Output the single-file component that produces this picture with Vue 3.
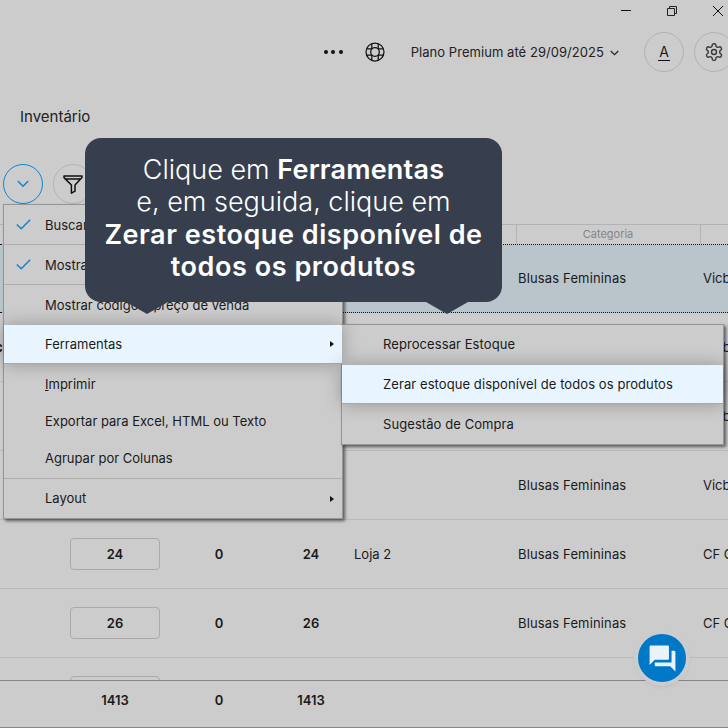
<script setup>
const rows = [
  { h: 68, qty: '', sel: true, cat: 'Blusas Femininas', brand: 'Vicb' },
  { qty: '', lead: 'c', cat: '', brand: 'Vicb' },
  { qty: '', cat: '', brand: 'Vicb' },
  { qty: '', cat: 'Blusas Femininas', brand: 'Vicb' },
  { qty: 24, a: 0, b: 24, loja: 'Loja 2', cat: 'Blusas Femininas', brand: 'CF C' },
  { qty: 26, a: 0, b: 26, cat: 'Blusas Femininas', brand: 'CF C' },
  { qty: '', cat: '', brand: '' }
]
const mainMenu = [
  { label: 'Buscar', check: true, line: true },
  { label: 'Mostrar', check: true, line: true },
  { label: 'Mostrar código e preço de venda' },
  { label: 'Ferramentas', active: true, arrow: true },
  { label: 'mprimir', key: 'I', short: true },
  { label: 'Exportar para Excel, HTML ou Texto', short: true },
  { label: 'Agrupar por Colunas', short: true, tall: true, line: true },
  { label: 'Layout', arrow: true, lift: true }
]
const subMenu = [
  { label: 'Reprocessar Estoque', lift: true },
  { label: 'Zerar estoque disponível de todos os produtos', active: true },
  { label: 'Sugestão de Compra' }
]
</script>

<template>
  <div class="screen">
    <div class="winbar">
      <svg width="10" height="10" viewBox="0 0 10 10"><path d="M0 4.5h10" stroke="#111" fill="none"/></svg>
      <svg width="10" height="10" viewBox="0 0 10 10"><path d="M.5 2.5h7v7h-7zM2.5 2.5V.5h7v7h-2" stroke="#222" fill="none"/></svg>
      <svg width="10" height="10" viewBox="0 0 10 10"><path d="M0 0l10 10M10 0L0 10" stroke="#111" fill="none"/></svg>
    </div>

    <div class="actions">
      <div class="dots"><i></i><i></i><i></i></div>
      <svg class="buoy" width="20" height="20" viewBox="0 0 20 20" fill="none" stroke="#111" stroke-width="1.25">
        <circle cx="10" cy="10" r="9"/><circle cx="10" cy="10" r="4.3"/>
        <path d="M6.8 1.7v5.4M13.2 1.7v5.4M6.8 12.9v5.4M13.2 12.9v5.4M1.7 6.8h5.4M1.7 13.2h5.4M12.9 6.8h5.4M12.9 13.2h5.4"/>
      </svg>
      <span class="plan">Plano Premium até 29/09/2025</span>
      <svg class="plan-chev" width="9" height="6" viewBox="0 0 9 6"><path d="M.7 1l3.8 3.6L8.3 1" stroke="#222" stroke-width="1.2" fill="none"/></svg>
      <div class="round font-btn"><span>A</span></div>
      <div class="round">
        <svg width="20" height="20" viewBox="0 0 24 24" fill="none" stroke="#3a3a3a" stroke-width="1.7" stroke-linejoin="round">
          <path d="M12.22 2h-.44a2 2 0 0 0-2 2v.18a2 2 0 0 1-1 1.73l-.43.25a2 2 0 0 1-2 0l-.15-.08a2 2 0 0 0-2.73.73l-.22.38a2 2 0 0 0 .73 2.73l.15.1a2 2 0 0 1 1 1.72v.51a2 2 0 0 1-1 1.74l-.15.09a2 2 0 0 0-.73 2.73l.22.38a2 2 0 0 0 2.73.73l.15-.08a2 2 0 0 1 2 0l.43.25a2 2 0 0 1 1 1.73V20a2 2 0 0 0 2 2h.44a2 2 0 0 0 2-2v-.18a2 2 0 0 1 1-1.73l.43-.25a2 2 0 0 1 2 0l.15.08a2 2 0 0 0 2.73-.73l.22-.39a2 2 0 0 0-.73-2.73l-.15-.08a2 2 0 0 1-1-1.74v-.5a2 2 0 0 1 1-1.74l.15-.09a2 2 0 0 0 .73-2.73l-.22-.38a2 2 0 0 0-2.73-.73l-.15.08a2 2 0 0 1-2 0l-.43-.25a2 2 0 0 1-1-1.73V4a2 2 0 0 0-2-2z"/>
          <circle cx="12" cy="12" r="3"/>
        </svg>
      </div>
    </div>

    <div class="title">Inventário</div>

    <div class="toolbar">
      <div class="round expand">
        <svg width="12" height="8" viewBox="0 0 12 8"><path d="M.8 1l5.2 5.2L11.2 1" stroke="#0e84d0" stroke-width="1.4" fill="none"/></svg>
      </div>
      <div class="round">
        <svg width="20" height="19" viewBox="0 0 20 19" fill="none" stroke="#111" stroke-width="1.5" stroke-linejoin="round">
          <path d="M1 1h18v1.6L12 10v6.2l-3.6 2V10L1 2.6zM3 4h14"/>
        </svg>
      </div>
    </div>

    <div class="table-head">
      <div class="hcell hcell-lead"></div>
      <div class="hcell hcell-cat">Categoria</div>
      <div class="hcell hcell-end"></div>
    </div>

    <div class="table-body">
      <div v-for="(r, i) in rows" :key="i" class="row" :class="{ sel: r.sel, first: r.h }">
        <div class="lead">{{ r.lead }}</div>
        <div class="qty">{{ r.qty }}</div>
        <div class="num">{{ r.a }}</div>
        <div class="num">{{ r.b }}</div>
        <div class="loja">{{ r.loja }}</div>
        <div class="cat">{{ r.cat }}</div>
        <div class="brand">{{ r.brand }}</div>
      </div>
    </div>

    <div class="table-foot">
      <div></div>
      <div class="foot-total">1413</div>
      <div class="num">0</div>
      <div class="num">1413</div>
    </div>

    <div class="menu main-menu">
      <div v-for="m in mainMenu" :key="m.label" class="item"
           :class="{ active: m.active, line: m.line, short: m.short, tall: m.tall, lift: m.lift }">
        <svg v-if="m.check" class="check" width="15" height="11" viewBox="0 0 15 11"><path d="M.8 5.4l4.4 4.4L14.2.8" stroke="#0e84d0" stroke-width="1.4" fill="none"/></svg>
        <span><u v-if="m.key">{{ m.key }}</u>{{ m.label }}</span>
        <i v-if="m.arrow" class="tri"></i>
      </div>
    </div>

    <div class="menu sub-menu">
      <div v-for="m in subMenu" :key="m.label" class="item" :class="{ active: m.active, lift: m.lift }">
        <span>{{ m.label }}</span>
      </div>
    </div>

    <div class="tip">
      <div>Clique em <b>Ferramentas</b></div>
      <div>e, em seguida, clique em</div>
      <div class="tip-strong"><b>Zerar estoque disponível de</b></div>
      <div class="tip-strong"><b>todos os produtos</b></div>
      <i class="tail tail-a"></i>
      <i class="tail tail-b"></i>
    </div>

    <div class="fab">
      <svg width="31" height="31" viewBox="0 0 24 24" fill="#eaf3fa">
        <path d="M21 6h-2v9H6v2c0 .55.45 1 1 1h11l4 4V7c0-.55-.45-1-1-1zm-4 6V3c0-.55-.45-1-1-1H3c-.55 0-1 .45-1 1v14l4-4h10c.55 0 1-.45 1-1z"/>
      </svg>
    </div>
  </div>
</template>

<style scoped>
.screen {
  position: relative;
  width: 728px;
  height: 728px;
  overflow: hidden;
  display: flex;
  flex-direction: column;
  background: #cccccc;
  color: #1a1a1a;
  font-family: Inter, "Liberation Sans", sans-serif;
  font-size: 13px;
}
.winbar {
  height: 20px;
  padding: 6px 5px 0 0;
  box-sizing: border-box;
  display: flex;
  justify-content: flex-end;
  gap: 36px;
}
.actions {
  height: 64px;
  margin-right: -6px;
  display: flex;
  align-items: center;
  justify-content: flex-end;
}
.dots { display: flex; gap: 3.5px; margin-right: 22px; }
.dots i { width: 4px; height: 4px; border-radius: 50%; background: #111; }
.buoy { margin-right: 26px; }
.plan { letter-spacing: 0.05px; color: #222; }
.plan-chev { margin: 1px 25px 0 6px; }
.round {
  width: 40px;
  height: 40px;
  flex: none;
  box-sizing: border-box;
  border: 1px solid #b3b3b3;
  border-radius: 50%;
  display: flex;
  align-items: center;
  justify-content: center;
}
.font-btn { margin-right: 10px; }
.font-btn span { font-size: 14px; border-bottom: 1px solid #111; line-height: 17px; padding: 0 1px; }
.title { height: 64px; line-height: 66px; padding-left: 20px; font-size: 15px; color: #222; }
.toolbar { height: 76px; padding: 16px 0 0 3px; box-sizing: border-box; display: flex; gap: 10px; }
.expand { border: 1.5px solid #0e84d0; }
.table-head {
  height: 21px;
  box-sizing: border-box;
  border-top: 1px solid #b3b3b3;
  border-bottom: 1px dotted #111;
  display: grid;
  grid-template-columns: 516px 184px 28px;
}
.hcell { border-right: 1px solid #b3b3b3; margin-right: -1px; }
.hcell-cat { color: #858585; font-size: 11px; line-height: 19px; text-align: center; }
.hcell-end { border-right: 0; }
.table-body { flex: 1; min-height: 0; overflow: hidden; }
.row {
  height: 69px;
  box-sizing: border-box;
  border-bottom: 1px solid #bababa;
  display: grid;
  grid-template-columns: 70px 90px 118px 66px 172px 184px 28px;
  align-items: center;
}
.row.first { height: 68px; padding-bottom: 1px; border-bottom: 1px dotted #111; background: #b9c4cb; }
.lead { text-indent: -5px; font-weight: 700; overflow: hidden; }
.qty {
  height: 32px;
  box-sizing: border-box;
  border: 1px solid #aaaaaa;
  border-radius: 4px;
  line-height: 30px;
  text-align: center;
  font-weight: 600;
}
.num { text-align: center; font-weight: 600; }
.loja { padding-left: 10px; }
.cat { padding-left: 2px; letter-spacing: 0.15px; }
.brand { padding-left: 3px; white-space: nowrap; }
.table-foot {
  height: 48px;
  flex: none;
  box-sizing: border-box;
  padding-bottom: 8px;
  border-top: 1px solid #858585;
  border-bottom: 1px solid #858585;
  display: grid;
  grid-template-columns: 70px 90px 118px 66px;
  align-items: center;
}
.foot-total { text-align: center; font-weight: 600; }
.menu {
  position: absolute;
  box-sizing: border-box;
  background: #cccccc;
  border: 1px solid #969696;
  box-shadow: 2px 2px 3px rgba(0, 0, 0, 0.55);
}
.main-menu { left: 3px; top: 204px; width: 340px; height: 315px; }
.sub-menu { left: 341px; top: 324px; width: 383px; height: 121px; }
.item {
  position: relative;
  height: 40px;
  box-sizing: border-box;
  display: flex;
  align-items: center;
  padding-left: 41px;
  color: #1a1a1a;
}
.sub-menu .item { letter-spacing: 0.08px; }
.item.line { border-bottom: 1px solid #aeaeae; }
.item.lift { padding-bottom: 2px; }
.item.short { height: 37px; }
.item.tall { height: 40px; padding-bottom: 2px; }
.item.active {
  z-index: 1;
  background: #e8f5ff;
  height: 39px;
  border-bottom: 1px solid #a8a8a8;
  box-shadow: 0 0 18px rgba(0, 0, 0, 0.28);
}
.main-menu .item.active { margin-bottom: 1px; }
.check { position: absolute; left: 12px; top: 14px; }
.tri {
  position: absolute;
  right: 8px;
  top: 50%;
  margin-top: -3px;
  border-left: 4px solid #111;
  border-top: 3px solid transparent;
  border-bottom: 3px solid transparent;
}
.tip {
  position: absolute;
  left: 85px;
  top: 138px;
  width: 417px;
  height: 164px;
  box-sizing: border-box;
  padding-top: 16px;
  border-radius: 16px;
  background: #373f4e;
  color: #fff;
  text-align: center;
  font-size: 27px;
  line-height: 32px;
  font-weight: 300;
}
.tip b { font-weight: 600; letter-spacing: 0.2px; }
.tip-strong b { letter-spacing: 0.55px; }
.tip-strong { position: relative; top: 1px; }
.tail {
  position: absolute;
  top: 164px;
  width: 0;
  height: 0;
  border-left: 21px solid transparent;
  border-right: 21px solid transparent;
  border-top: 12px solid #373f4e;
}
.tail-a { left: 41px; }
.tail-b { left: 341px; }
.fab {
  position: absolute;
  left: 638px;
  top: 634px;
  width: 48px;
  height: 48px;
  border-radius: 50%;
  background: #0078c8;
  box-shadow: 0 0 0 4px #cccccc, 0 2px 6px rgba(0, 0, 0, 0.2);
  display: flex;
  align-items: center;
  justify-content: center;
}
</style>
